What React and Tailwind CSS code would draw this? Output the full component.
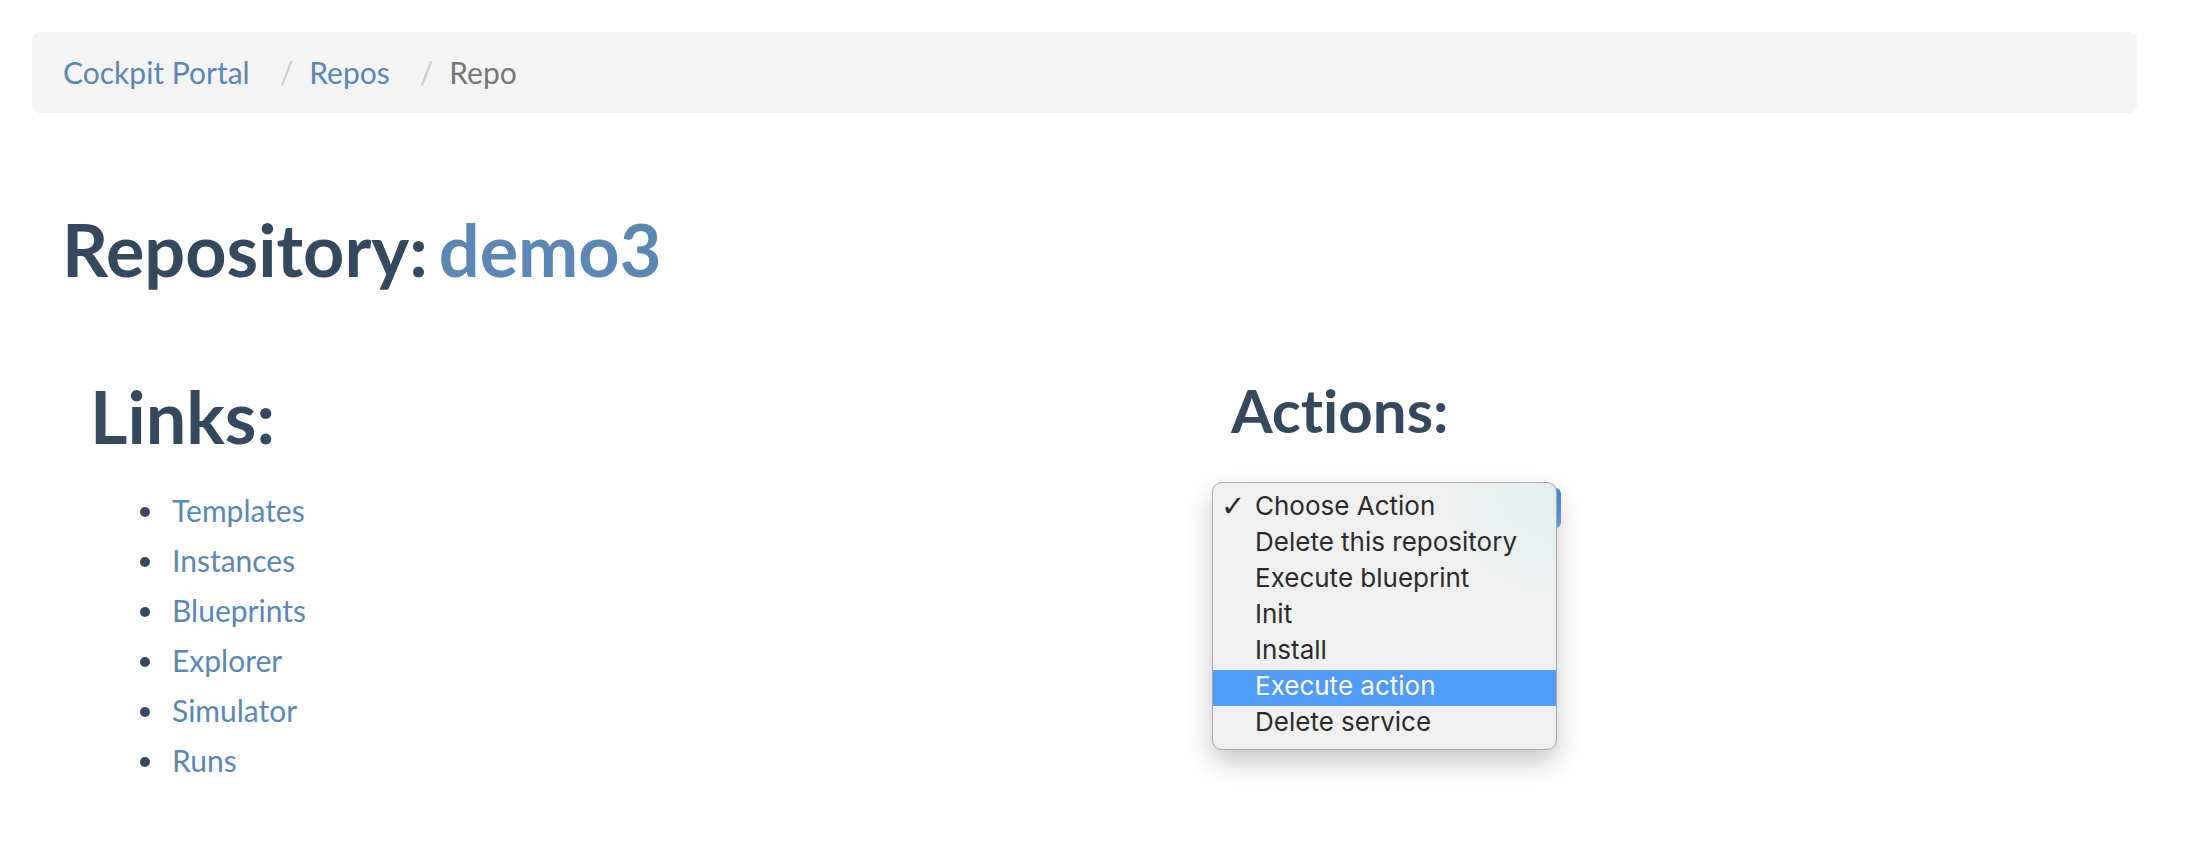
import React from 'react';

const links = ['Templates', 'Instances', 'Blueprints', 'Explorer', 'Simulator', 'Runs'];

const actions = [
  'Choose Action',
  'Delete this repository',
  'Execute blueprint',
  'Init',
  'Install',
  'Execute action',
  'Delete service',
];

const ActionMenu = () => {
  const checked = 0;
  const hovered = 5;

  return (
    <div className="relative -ml-[19px] mt-[39px] w-[345px]">
      {/* the select underneath, only its focus ring shows */}
      <div className="absolute top-[6px] -right-[4px] h-[40px] w-[24px] rounded-r-[6px] bg-gradient-to-b from-[#3f86e0] to-[#6aa9f0]" />

      <ul
        className="relative z-10 rounded-[10px] border border-[#a9a9a9] bg-[#f0f0f0] bg-[radial-gradient(circle_at_100%_0%,#e0f0f0_0%,#f0f0f0_28%)] py-[7px] shadow-[0_12px_26px_rgba(0,0,0,0.22)] text-[26px] text-[#2b2b2b]"
        style={{ fontFamily: 'Inter, "Open Sans", sans-serif' }}
      >
        {actions.map((label, i) => (
          <li
            key={label}
            className={`flex h-[36px] leading-[32px] ${
              i === hovered ? 'bg-[#4f9cfa] text-white' : ''
            }`}
          >
            <span className="w-[42px] shrink-0 pl-[8px] text-[29px] font-bold" style={{ fontFamily: '"DejaVu Sans", sans-serif' }}>
              {i === checked ? '✓' : ''}
            </span>
            <span>{label}</span>
          </li>
        ))}
      </ul>
    </div>
  );
};

const App = () => {
  return (
    <div
      className="min-h-[868px] w-full bg-white pt-[32px] text-[#34495e] [font-variant-ligatures:none]"
      style={{ fontFamily: 'Lato, "Liberation Sans", sans-serif' }}
    >
      {/* Breadcrumb */}
      <nav className="ml-[32px] w-[2105px] rounded-[8px] bg-[#f4f4f4] px-[31px] py-[19px] text-[30px] leading-[43px]">
        <ol className="flex items-center">
          <li>
            <a className="text-[#5a87b4]">Cockpit Portal</a>
          </li>
          <li className="flex">
            <span className="pl-[30px] pr-[16px] text-[#cccccc]">/</span>
            <a className="text-[#5a87b4]">Repos</a>
          </li>
          <li className="flex">
            <span className="pl-[30px] pr-[16px] text-[#cccccc]">/</span>
            <span className="text-[#777777]">Repo</span>
          </li>
        </ol>
      </nav>

      <main className="pl-[62px]">
        <h1 className="mt-[97px] text-[72px] font-bold leading-[1.1]">
          Repository:<span className="ml-[11px] text-[#5a87b4]">demo3</span>
        </h1>

        <div className="mt-[88px] flex">
          {/* Links */}
          <section className="ml-[28px] w-[1141px] shrink-0">
            <h1 className="text-[72px] font-bold leading-[1.1]">Links:</h1>
            <ul className="mt-[29px] text-[30px] leading-[50px]">
              {links.map((item) => (
                <li key={item} className="flex items-center">
                  <span className="ml-[50px] mr-[22px] mt-[3px] h-[10px] w-[10px] rounded-full bg-[#34495e]" />
                  <a className="text-[#5a87b4]">{item}</a>
                </li>
              ))}
            </ul>
          </section>

          {/* Actions */}
          <section>
            <h2 className="text-[60px] font-bold leading-[1.1]">Actions:</h2>
            <ActionMenu />
          </section>
        </div>
      </main>
    </div>
  );
};

export default App;
